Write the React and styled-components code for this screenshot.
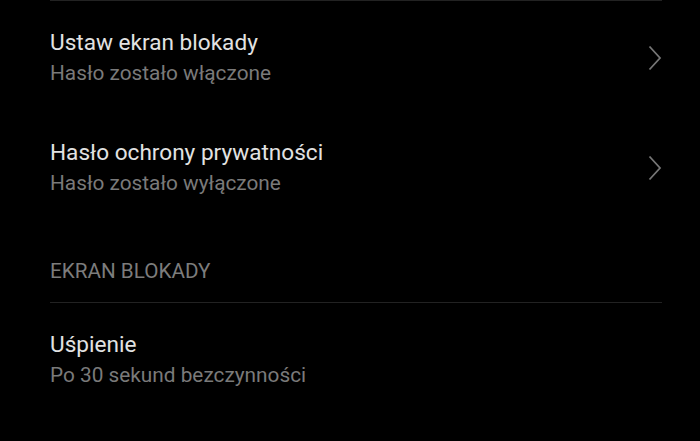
import React from "react";
import styled, { createGlobalStyle } from "styled-components";

const GlobalStyle = createGlobalStyle`
  html, body {
    margin: 0;
    padding: 0;
    background: #000;
  }
  body {
    font-family: Roboto, "Noto Sans", sans-serif;
    -webkit-font-smoothing: antialiased;
  }
`;

const Screen = styled.div`
  width: 700px;
  height: 441px;
  overflow: hidden;
  background: #000;
`;

const List = styled.div`
  margin: 0 38px 0 50px;
`;

const Divider = styled.div`
  height: 1px;
  background: #222;
`;

const Row = styled.div`
  display: flex;
  align-items: center;
  justify-content: space-between;
  padding: 28px 0 25px;
`;

const TextBlock = styled.div`
  display: flex;
  flex-direction: column;
  gap: 3px;
`;

const Title = styled.div`
  font-size: 22.6px;
  line-height: 28px;
  color: #e2e2e2;
`;

const Subtitle = styled.div`
  font-size: 20.8px;
  line-height: 26px;
  color: #7a7a7a;
`;

const SectionHeader = styled.div`
  padding: 37px 0 18px;
  font-size: 20.7px;
  line-height: 26px;
  color: #7c7c7c;
  text-transform: uppercase;
`;

const Chevron = () => (
  <svg width="14" height="26" viewBox="0 0 14 26" fill="none">
    <path d="M1.5 1.5 L12 13 L1.5 24.5" stroke="#767676" strokeWidth="1.8" />
  </svg>
);

const SettingRow = ({ title, subtitle, arrow }) => (
  <Row>
    <TextBlock>
      <Title>{title}</Title>
      <Subtitle>{subtitle}</Subtitle>
    </TextBlock>
    {arrow && <Chevron />}
  </Row>
);

export default function App() {
  return (
    <Screen>
      <GlobalStyle />
      <List>
        <Divider />
        <SettingRow
          arrow
          title="Ustaw ekran blokady"
          subtitle="Hasło zostało włączone"
        />
        <SettingRow
          arrow
          title="Hasło ochrony prywatności"
          subtitle="Hasło zostało wyłączone"
        />
        <SectionHeader>Ekran blokady</SectionHeader>
        <Divider />
        <SettingRow title="Uśpienie" subtitle="Po 30 sekund bezczynności" />
      </List>
    </Screen>
  );
}
